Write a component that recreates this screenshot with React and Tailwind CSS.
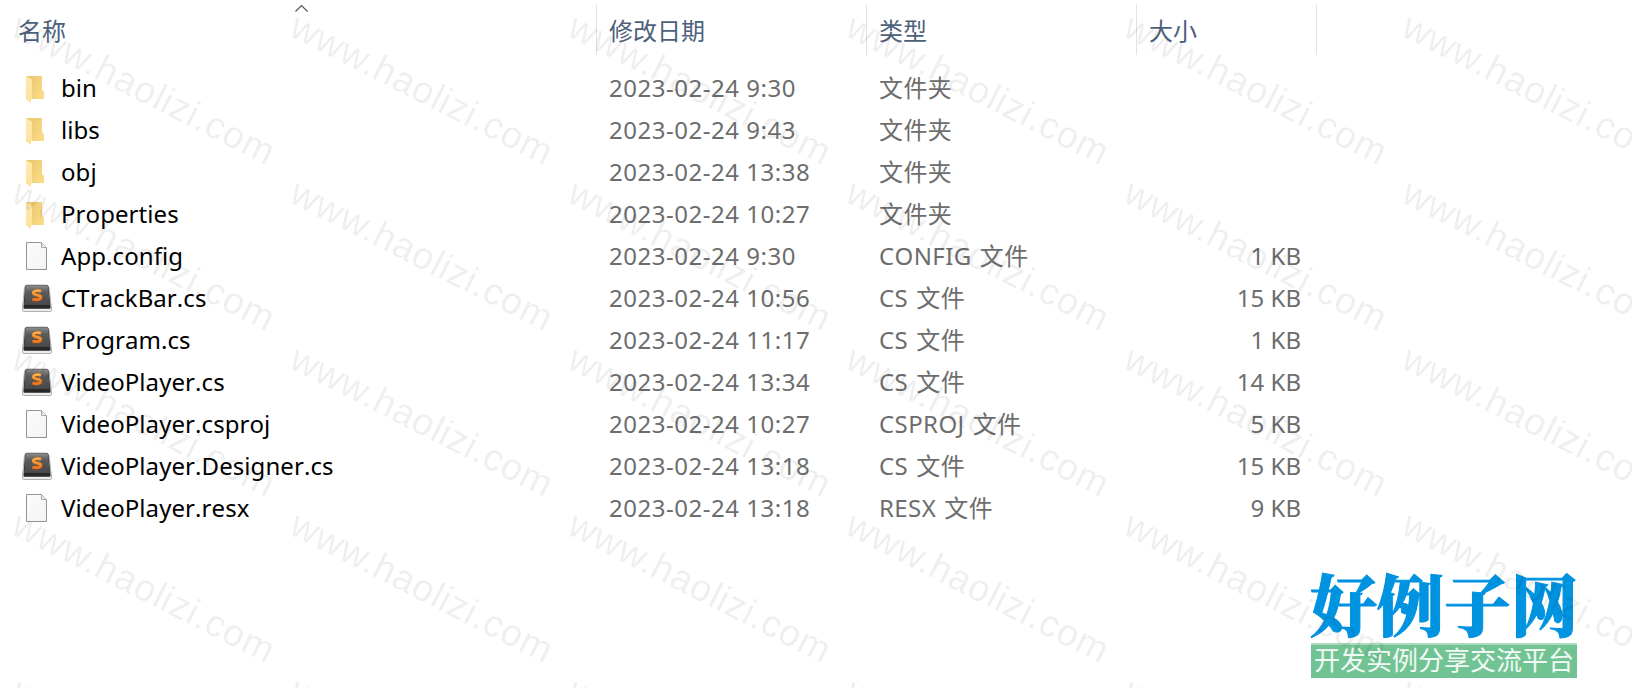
const FILES = [
  { name: 'bin', date: '2023-02-24 9:30', type: '文件夹', size: '', kind: 'folder' },
  { name: 'libs', date: '2023-02-24 9:43', type: '文件夹', size: '', kind: 'folder' },
  { name: 'obj', date: '2023-02-24 13:38', type: '文件夹', size: '', kind: 'folder' },
  { name: 'Properties', date: '2023-02-24 10:27', type: '文件夹', size: '', kind: 'folder' },
  { name: 'App.config', date: '2023-02-24 9:30', type: 'CONFIG 文件', size: '1 KB', kind: 'file' },
  { name: 'CTrackBar.cs', date: '2023-02-24 10:56', type: 'CS 文件', size: '15 KB', kind: 'sublime' },
  { name: 'Program.cs', date: '2023-02-24 11:17', type: 'CS 文件', size: '1 KB', kind: 'sublime' },
  { name: 'VideoPlayer.cs', date: '2023-02-24 13:34', type: 'CS 文件', size: '14 KB', kind: 'sublime' },
  { name: 'VideoPlayer.csproj', date: '2023-02-24 10:27', type: 'CSPROJ 文件', size: '5 KB', kind: 'file' },
  { name: 'VideoPlayer.Designer.cs', date: '2023-02-24 13:18', type: 'CS 文件', size: '15 KB', kind: 'sublime' },
  { name: 'VideoPlayer.resx', date: '2023-02-24 13:18', type: 'RESX 文件', size: '9 KB', kind: 'file' },
];

const MARK_COLS = [0, 1, 2, 3, 4, 5];
const MARK_ROWS = [0, 1, 2, 3, 4];

function FolderIcon() {
  return (
    <svg width="32" height="32" viewBox="0 0 32 32">
      <defs>
        <linearGradient id="folderBack" x1="0" y1="0" x2="1" y2="0.6">
          <stop offset="0" stopColor="#e9c46c" />
          <stop offset="1" stopColor="#f9da85" />
        </linearGradient>
        <linearGradient id="folderFront" x1="0" y1="0" x2="0" y2="1">
          <stop offset="0" stopColor="#ffe9ad" />
          <stop offset="1" stopColor="#fee29a" />
        </linearGradient>
      </defs>
      <path d="M5 3H21V17L23 19V26H9Z" fill="url(#folderBack)" />
      <path d="M5 3L11 6.5V25.5L10 26V30L5 26.5Z" fill="url(#folderFront)" />
    </svg>
  );
}

function FileIcon() {
  return (
    <svg width="32" height="32" viewBox="0 0 32 32">
      <defs>
        <linearGradient id="paper" x1="0" y1="0" x2="1" y2="1">
          <stop offset="0" stopColor="#fbfcfc" />
          <stop offset="1" stopColor="#f1f3f5" />
        </linearGradient>
      </defs>
      <path d="M5.5 1.5H20.5L25.5 6.5V28.5H5.5Z" fill="url(#paper)" stroke="#939393" />
      <path d="M20.5 1.5V6.5H25.5" fill="#e6e8ea" stroke="#a8a8a8" />
    </svg>
  );
}

function SublimeIcon() {
  return (
    <svg width="32" height="32" viewBox="0 0 32 32">
      <defs>
        <linearGradient id="keycap" x1="0" y1="0" x2="0" y2="1">
          <stop offset="0" stopColor="#8f8f8f" />
          <stop offset="0.35" stopColor="#5c5c5c" />
          <stop offset="1" stopColor="#484848" />
        </linearGradient>
        <linearGradient id="keyS" x1="0" y1="0" x2="0" y2="1">
          <stop offset="0" stopColor="#ffae4a" />
          <stop offset="1" stopColor="#f5761a" />
        </linearGradient>
      </defs>
      <path d="M3.500 4.500Q4 2 6 2H25Q27.500 2 28 4.500L30.500 25V27Q30.500 28.500 29 28.500H3Q1.500 28.500 1.500 27V25Z" fill="#ececec" stroke="#b0b0b0" />
      <path d="M4 4Q4.500 2 6.500 2H25Q27.300 2 27.600 4L29.500 23.500V25Q29.500 25.800 28.500 25.800H3.500Q2.500 25.800 2.500 25V23.500Z" fill="#272727" />
      <path d="M4.400 4Q4.800 2.200 6.500 2.200H25Q27 2.200 27.300 4L28.800 22H3.200Z" fill="url(#keycap)" />
      <path d="M20 8.300C17.500 7.300 12.300 7.300 12.400 10C12.500 12.800 19.800 11.300 19.800 14.300C19.800 17.200 14 17 11.500 16" fill="none" stroke="#a85a20" strokeOpacity="0.4" strokeWidth="4.500" />
      <path d="M20 8.300C17.500 7.300 12.300 7.300 12.400 10C12.500 12.800 19.800 11.300 19.800 14.300C19.800 17.200 14 17 11.500 16" fill="none" stroke="url(#keyS)" strokeWidth="2.700" />
    </svg>
  );
}

const ICONS = { folder: FolderIcon, file: FileIcon, sublime: SublimeIcon };

function FileRow({ file }) {
  const Icon = ICONS[file.kind];
  return (
    <div className="flex h-[42px] items-center leading-[30px] whitespace-nowrap text-[#6d6d6d]">
      <div className="flex w-[609px] items-center pl-[21px] text-black">
        <Icon />
        <span className="ml-2 pb-0.5 tracking-[0.07px] [font-kerning:none]">{file.name}</span>
      </div>
      <div className="w-[270px] pb-0.5 tracking-[0.52px]">{file.date}</div>
      <div className="w-[270px] pb-0.5 tracking-[0.4px] [font-kerning:none] [word-spacing:1.5px]">{file.type}</div>
      <div className="w-[152px] pb-0.5 text-right">{file.size}</div>
    </div>
  );
}

function Header() {
  return (
    <div className="flex h-[51px] w-[1317px] leading-[53px] text-[#4c607a]">
      <div className="relative w-[597px] border-r border-[#e2e2e2] pl-[18px]">
        名称
        <svg className="absolute top-0 left-[294px]" width="15" height="9" viewBox="0 0 15 9">
          <path d="M1.500 7.500L7.500 1.500L13.500 7.500" fill="none" stroke="#555" strokeWidth="1.200" />
        </svg>
      </div>
      <div className="w-[270px] border-r border-[#e2e2e2] pl-3">修改日期</div>
      <div className="w-[270px] border-r border-[#e2e2e2] pl-3">类型</div>
      <div className="w-[180px] border-r border-[#e2e2e2] pl-3">大小</div>
    </div>
  );
}

function SiteLogo() {
  return (
    <div className="absolute top-[572px] left-[1311px] w-[266px]">
      <div className="-ml-px h-[71px] font-['Noto_Serif_CJK_SC','Noto_Sans_CJK_SC',serif] text-[67px] leading-[61px] font-black whitespace-nowrap text-[#0093e0] [-webkit-text-stroke:1px_#0093e0]">
        好例子网
      </div>
      <div className="h-[35px] border-t-2 border-[#aadbc0] bg-[#72c394] text-center font-['Noto_Sans_CJK_SC',sans-serif] text-[26px] leading-[28px] whitespace-nowrap text-white/90">
        开发实例分享交流平台
      </div>
    </div>
  );
}

// Repeating diagonal site mark laid over the whole listing
function Watermark() {
  return (
    <div className="pointer-events-none absolute inset-0 overflow-hidden">
      {MARK_ROWS.map((row) =>
        MARK_COLS.map((col) => (
          <span
            key={`${row}-${col}`}
            className="absolute origin-bottom-left rotate-[26.9deg] font-['Liberation_Sans',Arial,sans-serif] text-[37.5px] leading-[28px] tracking-[0.8px] whitespace-nowrap text-black/[0.075]"
            style={{ left: 9 + col * 278, top: 8 + row * 166 }}
          >
            www.haolizi.com
          </span>
        ))
      )}
    </div>
  );
}

export default function App() {
  return (
    <div className="relative h-[688px] w-[1632px] overflow-hidden bg-white pt-1 font-['Noto_Sans','Noto_Sans_CJK_SC',sans-serif] text-2xl">
      <Header />
      <div className="pt-[13px]">
        {FILES.map((file) => (
          <FileRow key={file.name} file={file} />
        ))}
      </div>
      <SiteLogo />
      <Watermark />
    </div>
  );
}
